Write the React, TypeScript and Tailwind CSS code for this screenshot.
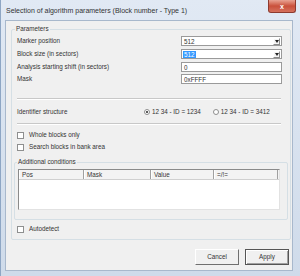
import React from 'react';

const font = { fontFamily: '"Liberation Sans", Arial, sans-serif' };

const Combo: React.FC<{ value: string; selected?: boolean }> = ({ value, selected }) => (
  <div className="w-[101px] h-[10px] bg-white border border-[#9a9a9a] flex items-center">
    <span
      className={`ml-[1px] px-[1px] leading-[7px] text-[6.3px] ${selected ? 'bg-[#3399ff] text-white' : 'text-[#333]'}`}
    >
      {value}
    </span>
    <div className="ml-auto mr-[1px] w-[7px] h-[7px] bg-[#f4f4f4] border-t border-l border-white border-r border-b border-r-[#8a8a8a] border-b-[#8a8a8a] flex items-center justify-center">
      <svg width="4" height="3" viewBox="0 0 4 3">
        <path d="M0 0h4L2 3z" fill="#222" />
      </svg>
    </div>
  </div>
);

const Edit: React.FC<{ value: string }> = ({ value }) => (
  <div className="w-[101px] h-[10px] bg-white border border-[#9a9a9a] flex items-center">
    <span className="ml-[2px] leading-[7px] text-[6.3px] text-[#333]">{value}</span>
  </div>
);

const Check: React.FC<{ label: string }> = ({ label }) => (
  <div className="flex items-center h-[8px]">
    <div className="w-[7px] h-[7px] bg-white border border-[#8e8f8f]" />
    <span className="ml-[5px] text-[6.3px] leading-[8px] text-[#333]">{label}</span>
  </div>
);

const Radio: React.FC<{ label: string; checked?: boolean }> = ({ label, checked }) => (
  <div className="flex items-center">
    <div className="w-[6px] h-[6px] rounded-full bg-white border border-[#8e8f8f] flex items-center justify-center">
      {checked && <div className="w-[2px] h-[2px] rounded-full bg-[#222]" />}
    </div>
    <span className="ml-[2px] text-[6.3px] leading-[8px] text-[#333]">{label}</span>
  </div>
);

const Separator: React.FC = () => (
  <div className="ml-[5px] w-[264px] h-[2px] border-t border-[#c8c8c8] border-b border-b-white" />
);

const rows = [
  { label: 'Marker position', control: <Combo value="512" /> },
  { label: 'Block size (in sectors)', control: <Combo value="512" selected /> },
  { label: 'Analysis starting shift (in sectors)', control: <Edit value="0" /> },
  { label: 'Mask', control: <Edit value="0xFFFF" /> },
];

const columns = [
  { name: 'Pos', w: 'w-[65px]' },
  { name: 'Mask', w: 'w-[67px]' },
  { name: 'Value', w: 'w-[63px]' },
  { name: '=/!=', w: 'w-[64px]' },
];

export default function App() {
  return (
    <div
      className="w-[300px] h-[276px] flex flex-col overflow-hidden bg-gradient-to-b from-[#e1e9f4] to-[#cfdbea] border-l border-[#8ea6c4]"
      style={font}
    >
      {/* title bar */}
      <div className="h-[20px] flex items-start shrink-0">
        <span className="ml-[5px] mt-[7px] text-[7px] leading-[8px] text-[#333] whitespace-nowrap">
          Selection of algorithm parameters (Block number - Type 1)
        </span>
        <div className="ml-auto mr-[4px] w-[28px] h-[13px] rounded-b-[3px] bg-gradient-to-b from-[#e8a293] via-[#c9503b] to-[#d5705c] border border-t-0 border-[#8d3a2e] flex items-center justify-center">
          <span className="text-white text-[7px] leading-[7px] font-bold">x</span>
        </div>
      </div>

      {/* client area */}
      <div className="ml-[4px] mr-[7px] mb-[5px] flex-1 bg-[#f0f0f0] border border-[#a8b8cc] flex flex-col">
        <div className="relative mt-[8px] ml-[5px] w-[280px] h-[211px] border border-[#d5dfe5] rounded-[2px]">
          <span className="absolute -top-[5px] left-[3px] px-[1px] bg-[#f0f0f0] text-[6.3px] leading-[8px] text-[#333]">
            Parameters
          </span>

          <div className="flex flex-col pt-[6px]">
            {rows.map((r, i) => (
              <div
                key={r.label}
                className={`flex items-center h-[10px] ${i === 0 ? '' : i === 3 ? 'mt-[2px]' : 'mt-[3px]'}`}
              >
                <span className="ml-[5px] text-[6.3px] leading-[8px] text-[#333]">{r.label}</span>
                <div className="ml-auto mr-[8px]">{r.control}</div>
              </div>
            ))}

            <div className="mt-[14px]">
              <Separator />
            </div>

            <div className="mt-[7px] h-[10px] flex items-center">
              <span className="ml-[5px] w-[127px] text-[6.3px] leading-[8px] text-[#333]">Identifier structure</span>
              <Radio label="12 34 - ID = 1234" checked />
              <div className="ml-[12px]">
                <Radio label="12 34 - ID = 3412" />
              </div>
            </div>

            <div className="mt-[6px]">
              <Separator />
            </div>

            <div className="mt-[6px] ml-[5px]">
              <Check label="Whole blocks only" />
            </div>
            <div className="mt-[4px] ml-[5px]">
              <Check label="Search blocks in bank area" />
            </div>

            {/* additional conditions */}
            <div className="relative mt-[11px] ml-[2px] w-[274px] h-[58px] border border-[#d5dfe5] rounded-[2px]">
              <span className="absolute -top-[5px] left-[2px] px-[1px] bg-[#f0f0f0] text-[6.3px] leading-[8px] text-[#333]">
                Additional conditions
              </span>
              <div className="mt-[6px] ml-[3px] w-[262px] h-[41px] bg-white border-t border-l border-[#8a8a8a] border-r border-b border-r-[#e2e2e2] border-b-[#e2e2e2] flex flex-col">
                <div className="flex h-[10px] bg-[#f3f3f3] border-b border-[#d0d0d0]">
                  {columns.map((c) => (
                    <div
                      key={c.name}
                      className={`${c.w} h-full flex items-center border-r border-[#a0a0a0] border-l border-l-white`}
                    >
                      <span className="ml-[2px] text-[6.3px] leading-[8px] text-[#333]">{c.name}</span>
                    </div>
                  ))}
                </div>
              </div>
            </div>

            <div className="mt-[5px] ml-[5px]">
              <Check label="Autodetect" />
            </div>
          </div>
        </div>

        {/* buttons */}
        <div className="mt-[9px] flex justify-end gap-[6px] mr-[3px]">
          <button className="w-[44px] h-[16px] bg-[#f0f0f0] border-t border-l border-white border-r border-b border-r-[#6f6f6f] border-b-[#6f6f6f] text-[6.3px] text-[#333] flex items-center justify-center">
            Cancel
          </button>
          <button className="w-[44px] h-[16px] bg-[#f0f0f0] border border-[#555] shadow-[inset_1px_1px_0_#fff,inset_-1px_-1px_0_#a0a0a0] text-[6.3px] text-[#333] flex items-center justify-center">
            Apply
          </button>
        </div>
      </div>
    </div>
  );
}
